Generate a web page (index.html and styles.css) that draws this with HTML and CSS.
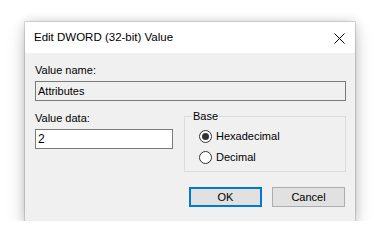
FILE: index.html
```html
<!DOCTYPE html>
<html>
<head>
<meta charset="utf-8">
<link rel="stylesheet" href="styles.css">
</head>
<body>
<div class="dialog">
  <div class="titlebar">
    <span class="title">Edit DWORD (32-bit) Value</span>
    <svg class="close" width="11" height="11" viewBox="0 0 11 11"><path d="M0.5 0.5 L10.5 10.5 M10.5 0.5 L0.5 10.5" stroke="#000" stroke-width="1" fill="none"/></svg>
  </div>
  <div class="content">
    <div class="label first">Value name:</div>
    <div class="textbox readonly">Attributes</div>
    <div class="row">
      <div class="left">
        <div class="label">Value data:</div>
        <div class="textbox data">2</div>
      </div>
      <fieldset class="group">
        <legend>Base</legend>
        <div class="radios">
          <div class="radio"><span class="dot checked"></span><span>Hexadecimal</span></div>
          <div class="radio"><span class="dot"></span><span>Decimal</span></div>
        </div>
      </fieldset>
    </div>
    <div class="buttons">
      <div class="btn default">OK</div>
      <div class="btn">Cancel</div>
    </div>
  </div>
</div>
</body>
</html>
```
FILE: styles.css
```css
html, body {
  margin: 0;
  padding: 0;
  background: #ffffff;
}
body {
  padding: 22px 0 0 25px;
  font-family: "Liberation Sans", Arial, sans-serif;
  font-size: 11px;
  color: #000;
}
.dialog {
  width: 330px;
  height: 199px;
  background: #f0f0f0;
  box-shadow: 0 0 0 1px rgba(0,0,0,0.12), 0 0 10px rgba(0,0,0,0.16), 0 8px 18px rgba(0,0,0,0.18);
  display: flex;
  flex-direction: column;
}
.titlebar {
  height: 31px;
  background: #ffffff;
  display: flex;
  align-items: center;
  justify-content: space-between;
  padding: 0 10px 0 9px;
}
.title {
  font-size: 11.5px;
  line-height: 15px;
  padding-bottom: 1px;
}
.close {
  display: block;
  margin-top: 1px;
}
.content {
  padding: 0 9px 0 10px;
}
.label {
  line-height: 15px;
  height: 15px;
}
.label.first {
  margin-top: 10px;
  margin-bottom: 3px;
}
.textbox {
  box-sizing: border-box;
  height: 20px;
  border: 1px solid #7a7a7a;
  padding: 0 2px;
  line-height: 18px;
}
.textbox.readonly {
  background: #f0f0f0;
}
.textbox.data {
  background: #ffffff;
  width: 138px;
  font-size: 12px;
}
.row {
  display: grid;
  grid-template-columns: 138px 162px;
  column-gap: 11px;
  margin-top: 8px;
}
.left .label {
  margin-top: 2px;
  margin-bottom: 3px;
}
.group {
  margin: 0;
  padding: 0 0 8px 0;
  border: 1px solid #dcdcdc;
  min-width: 0;
  height: 63px;
  box-sizing: border-box;
}
.group legend {
  margin-left: 7px;
  padding: 0 1px;
  line-height: 15px;
}
.radios {
  padding-left: 14px;
  padding-top: 6px;
  display: flex;
  flex-direction: column;
  row-gap: 8px;
}
.radio {
  display: flex;
  align-items: center;
  column-gap: 4px;
  height: 13px;
  line-height: 13px;
}
.dot {
  box-sizing: border-box;
  width: 13px;
  height: 13px;
  border: 1px solid #333;
  border-radius: 50%;
  background: #fff;
  display: flex;
  align-items: center;
  justify-content: center;
}
.dot.checked::after {
  content: "";
  width: 7px;
  height: 7px;
  border-radius: 50%;
  background: #333;
}
.buttons {
  display: flex;
  justify-content: flex-end;
  column-gap: 10px;
  margin-top: 15px;
  padding-right: 1px;
}
.btn {
  box-sizing: border-box;
  width: 73px;
  height: 20px;
  background: #e1e1e1;
  border: 1px solid #adadad;
  text-align: center;
  line-height: 18px;
}
.btn.default {
  border: 2px solid #0078d7;
  line-height: 16px;
}
```
